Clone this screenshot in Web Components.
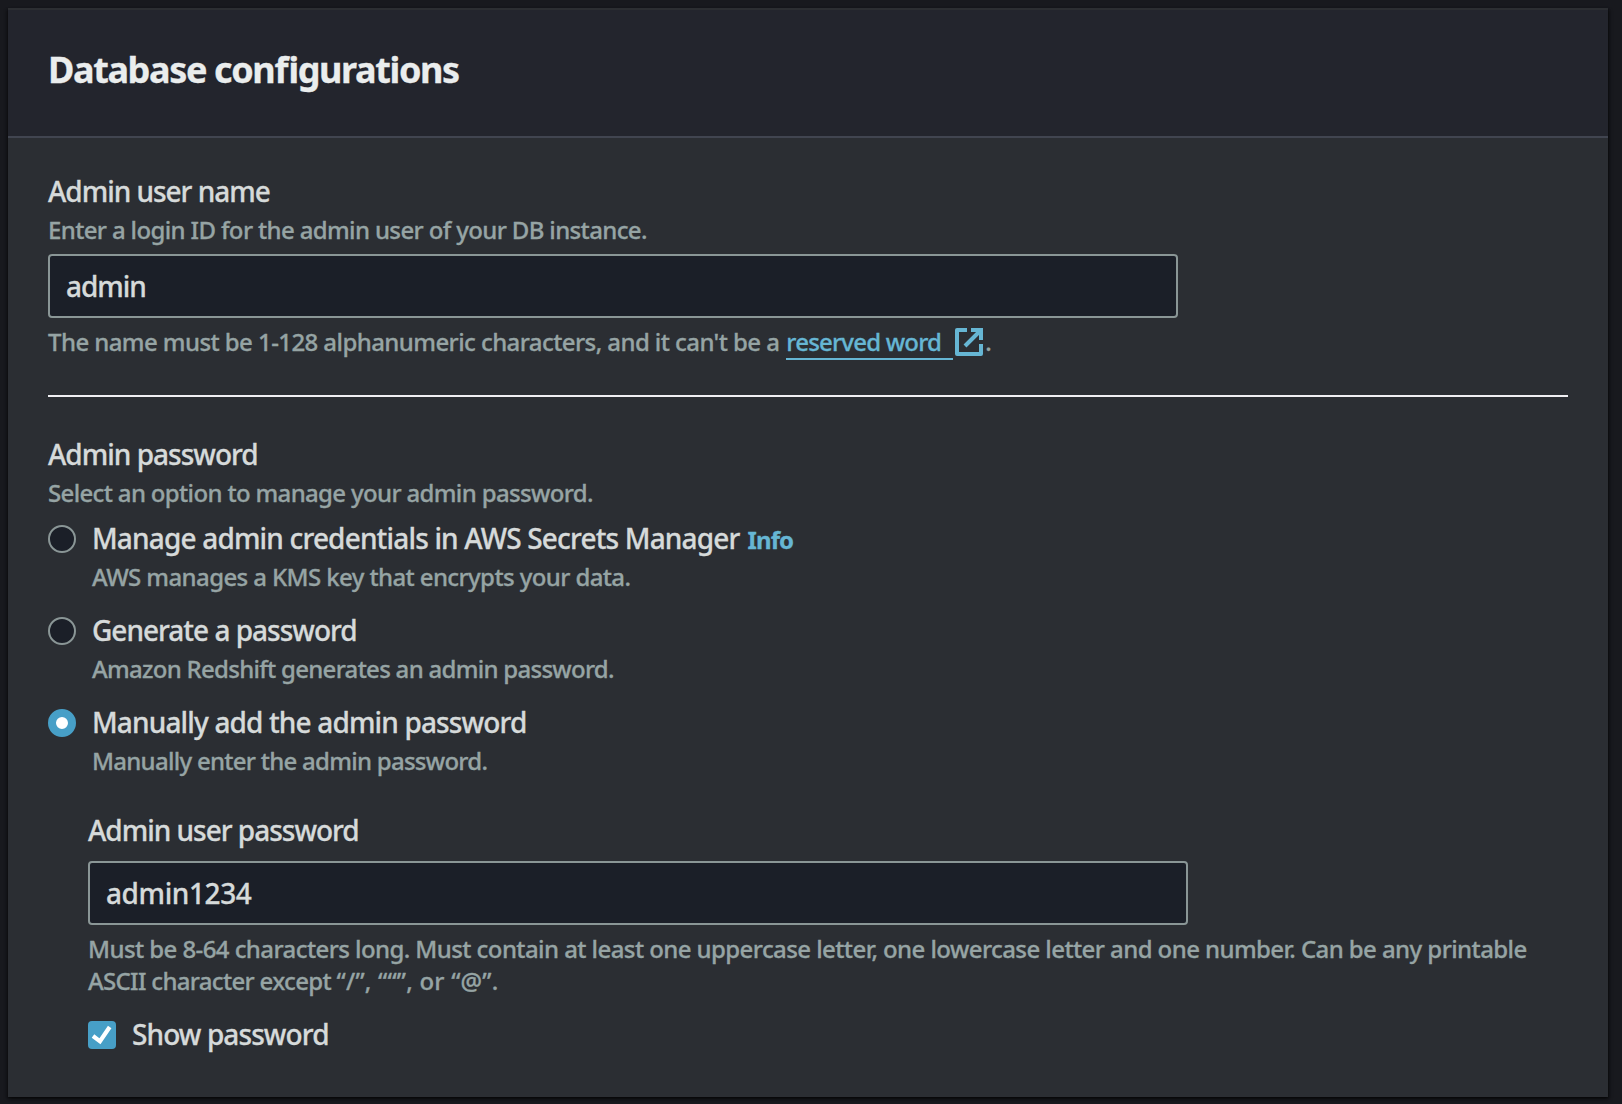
<!DOCTYPE html>
<html lang="en"><head><meta charset="utf-8"><title>Database configurations</title>
<style>
html,body{margin:0;background:#18191e}
body{height:1104px;overflow:hidden;font-family:"Noto Sans","Open Sans",sans-serif;font-weight:500;color:#d6dada}
</style></head><body>
<db-page></db-page>
<script>
const define=(name,html)=>customElements.define(name,class extends HTMLElement{
  constructor(){super();this.attachShadow({mode:'open'}).innerHTML=html;}
});

define('ui-label',`<style>:host{display:block;font-size:28px;line-height:41px;height:40px;color:#d6dada;letter-spacing:var(--ls,-.85px);white-space:nowrap;-webkit-text-stroke:.3px}</style><slot></slot>`);
define('ui-hint',`<style>:host{display:block;font-size:24px;line-height:32px;color:#96a4a4;letter-spacing:var(--ls,-.58px);white-space:nowrap;-webkit-text-stroke:.3px}</style><slot></slot>`);
define('ui-field',`<style>:host{display:flex;align-items:center;box-sizing:border-box;height:64px;border:2px solid #8a9696;border-radius:4px;background:#1b1f28;padding:0 16px}</style><ui-label><slot></slot></ui-label>`);
define('ui-link',`<style>:host{display:inline-flex;height:32px;color:#66b6d4}
.t{border-bottom:2px solid #66b6d4;height:32px;width:167px;box-sizing:content-box}
svg{display:block;margin:2px 0 0 2px}</style><span class="t"><slot></slot></span><svg width="28" height="28" viewBox="0 0 28 28" fill="none" stroke="#66b6d4" stroke-width="4"><path d="M12 2H2V26H26V16" stroke-linejoin="round"/><path d="M16 2H26V12" stroke-linejoin="miter"/><path d="M10 18L25 3"/></svg>`);
define('ui-radio',`<style>:host{display:grid;grid-template-columns:28px 1fr;column-gap:16px}
i{display:block;box-sizing:border-box;width:28px;height:28px;margin-top:7px;border-radius:50%;border:2px solid #8a9696;background:#1b1f28}
:host([checked]) i{border:8px solid #479fc7;background:#fff}
.r{display:flex;flex-direction:column;gap:3px}</style><i></i><div class="r"><slot></slot></div>`);
define('ui-checkbox',`<style>:host{display:flex;gap:16px}
svg{display:block;margin-top:7px}</style><svg width="28" height="28" viewBox="0 0 28 28"><rect width="28" height="28" rx="4" fill="#479fc7"/><path d="M5 15L12 20.3L21.7 6" fill="none" stroke="#fff" stroke-width="4.2"/></svg><slot></slot>`);
define('ui-panel',`<style>:host{display:block;box-sizing:border-box;width:1600px;height:1089px;background:#2b2e33;border-top:2px solid #2c2e32;box-shadow:0 1px 2px rgba(0,0,0,.5),2px 2px 3px rgba(0,0,0,.35),-2px 2px 3px rgba(0,0,0,.25)}
header{box-sizing:border-box;height:128px;padding:38px 40px 0;background:#23252d;border-bottom:2px solid #414550}
h2{margin:0;font-size:36px;line-height:44px;font-weight:700;color:#eaeded;letter-spacing:-1.37px;font-feature-settings:"liga" 1;-webkit-text-stroke:.3px}
.b{padding:33px 40px 43px;display:flex;flex-direction:column}</style><header><h2><slot name="title"></slot></h2></header><div class="b"><slot></slot></div>`);
define('db-page',`<style>:host{display:block;padding:8px}
.s{display:flex;flex-direction:column}
.g3{margin-top:3px}.g8{margin-top:8px}
hr{box-sizing:border-box;width:1520px;height:2px;border:0;margin:37px 0;background:#f0eff3}
.radios{display:flex;flex-direction:column;gap:17px;margin-top:9px}
.row{display:flex}
.info{color:#66b6d4;font-size:24px;line-height:1;font-weight:700;letter-spacing:-.9px;margin-left:8px}
.manual{display:flex;flex-direction:column;margin:33px 0 0 40px}
</style>
<ui-panel><span slot="title">Database configurations</span>
<section class="s">
<ui-label style="--ls:-1.03px">Admin user name</ui-label>
<ui-hint class="g3" style="--ls:-.64px">Enter a login ID for the admin user of your DB instance.</ui-hint>
<ui-field class="g8" style="width:1130px;--ls:-1.05px">admin</ui-field>
<ui-hint class="g8"><div class="row"><span>The name must be 1-128 alphanumeric characters, and it can't be a</span><ui-link style="margin-left:7px"><span style="letter-spacing:-.8px">reserved word</span></ui-link><span style="margin-left:2px">.</span></div></ui-hint>
</section>
<hr>
<section class="s">
<ui-label style="--ls:-.99px">Admin password</ui-label>
<ui-hint class="g3" style="--ls:-.66px">Select an option to manage your admin password.</ui-hint>
<div class="radios">
<ui-radio><ui-label style="--ls:-.83px">Manage admin credentials in AWS Secrets Manager<span class="info">Info</span></ui-label><ui-hint style="--ls:-.61px">AWS manages a KMS key that encrypts your data.</ui-hint></ui-radio>
<ui-radio><ui-label style="--ls:-1px">Generate a password</ui-label><ui-hint style="--ls:-.72px">Amazon Redshift generates an admin password.</ui-hint></ui-radio>
<ui-radio checked><ui-label style="--ls:-.85px">Manually add the admin password</ui-label><ui-hint style="--ls:-.73px">Manually enter the admin password.</ui-hint></ui-radio>
</div>
<div class="manual">
<ui-label style="--ls:-1.01px">Admin user password</ui-label>
<ui-field style="width:1100px;margin-top:11px;--ls:-.4px">admin1234</ui-field>
<ui-hint class="g8" style="--ls:-.582px"><span>Must be 8-64 characters long. Must contain at least one uppercase letter, one lowercase letter and one number. Can be any printable</span><br><span style="letter-spacing:-.68px">ASCII character except <span style="letter-spacing:.2px">“/”, ““”, or “@”.</span></span></ui-hint>
<ui-checkbox style="margin-top:17px"><ui-label style="--ls:-.9px">Show password</ui-label></ui-checkbox>
</div>
</section>
</ui-panel>`);
</script></body></html>
